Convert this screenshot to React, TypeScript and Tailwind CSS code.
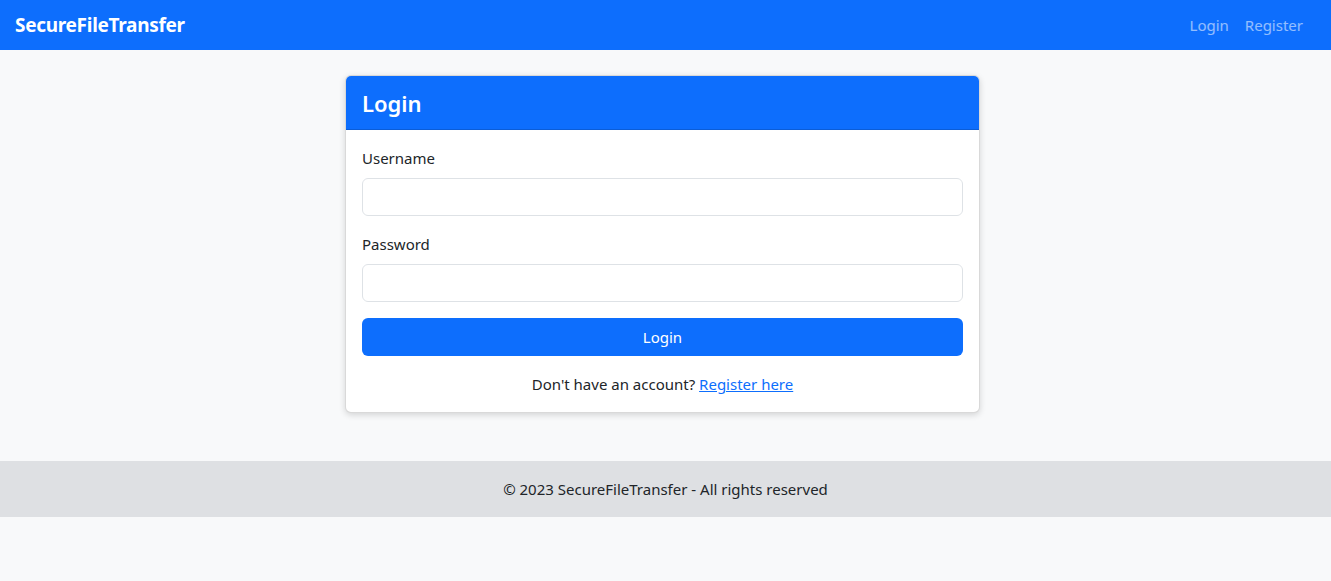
import React from 'react';

const font = { fontFamily: '"Noto Sans", "Open Sans", sans-serif' };

export default function App() {
  return (
    <div className="min-h-[581px] bg-[#f8f9fa] text-[#212529] text-base" style={font}>
      {/* Navbar */}
      <nav className="h-[50px] bg-[#0d6efd] flex items-center justify-between pl-[15px] pr-[20px]">
        <span className="text-white text-[19px] font-bold tracking-[-0.3px]">SecureFileTransfer</span>
        <div className="flex items-center">
          <a className="px-2 text-white/55 text-[15px]">Login</a>
          <a className="px-2 text-white/55 text-[15px]">Register</a>
        </div>
      </nav>

      {/* Login card */}
      <div className="flex justify-center pt-[25px] pb-[48px] pr-[6px]">
        <div className="w-[635px] bg-white border border-black/15 rounded-md shadow-[0_2px_6px_rgba(0,0,0,0.15)] overflow-hidden">
          <div className="bg-[#0d6efd] h-[54px] px-4 flex items-center border-b border-black/15">
            <h4 className="text-white text-[22px] font-semibold leading-none">Login</h4>
          </div>
          <div className="p-4">
            <label className="block text-[15px] leading-6 mb-2">Username</label>
            <input className="block w-full h-[38px] border border-[#dee2e6] rounded-md mb-4 px-3 outline-none" />
            <label className="block text-[15px] leading-6 mb-2">Password</label>
            <input type="password" className="block w-full h-[38px] border border-[#dee2e6] rounded-md mb-4 px-3 outline-none" />
            <button className="w-full h-[38px] bg-[#0d6efd] text-white text-[15px] rounded-md">Login</button>
            <p className="mt-4 text-center text-[15px] leading-6">
              Don't have an account? <a className="text-[#0d6efd] underline">Register here</a>
            </p>
          </div>
        </div>
      </div>

      {/* Footer */}
      <footer className="h-[56px] bg-[#dee0e3] flex items-center justify-center">
        <span className="text-[15px]">© 2023 SecureFileTransfer - All rights reserved</span>
      </footer>
    </div>
  );
}
